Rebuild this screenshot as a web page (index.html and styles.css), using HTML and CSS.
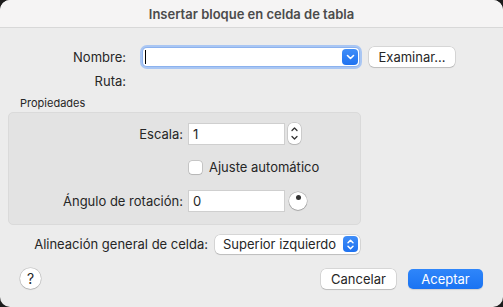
FILE: index.html
```html
<!DOCTYPE html>
<html lang="es">
<head>
    <meta charset="UTF-8">
    <title>Insertar bloque en celda de tabla</title>
    <link rel="stylesheet" href="styles.css">
</head>
<body>
    <div class="window">
        <div class="titlebar">Insertar bloque en celda de tabla</div>

        <div class="content">
            <div class="row row-name">
                <label class="label">Nombre:</label>
                <div class="combo">
                    <span class="caret"></span>
                    <span class="combo-btn">
                        <svg width="9" height="6" viewBox="0 0 9 6"><path d="M1.5 1.5 L4.5 4.5 L7.5 1.5" fill="none" stroke="#fff" stroke-width="1.6" stroke-linecap="round" stroke-linejoin="round"/></svg>
                    </span>
                </div>
                <button class="btn browse">Examinar...</button>
            </div>

            <div class="row row-path">
                <label class="label">Ruta:</label>
            </div>

            <div class="group-title">Propiedades</div>
            <div class="group">
                <div class="row">
                    <label class="glabel">Escala:</label>
                    <input class="field" type="text" value="1">
                    <span class="stepper">
                        <svg width="13" height="21" viewBox="0 0 13 21">
                            <path d="M4 7.5 L6.5 5 L9 7.5" fill="none" stroke="#333" stroke-width="1.3" stroke-linecap="round" stroke-linejoin="round"/>
                            <path d="M4 13.5 L6.5 16 L9 13.5" fill="none" stroke="#333" stroke-width="1.3" stroke-linecap="round" stroke-linejoin="round"/>
                        </svg>
                    </span>
                </div>
                <div class="row row-check">
                    <span class="glabel"></span>
                    <span class="checkbox"></span>
                    <span class="check-text">Ajuste automático</span>
                </div>
                <div class="row row-angle">
                    <label class="glabel">Ángulo de rotación:</label>
                    <input class="field" type="text" value="0">
                    <span class="dial"><span class="dot"></span></span>
                </div>
            </div>

            <div class="row row-align">
                <label class="alabel">Alineación general de celda:</label>
                <div class="popup">
                    <span>Superior izquierdo</span>
                    <span class="popup-btn">
                        <svg width="9" height="13" viewBox="0 0 9 13"><path d="M2 4.8 L4.5 2.3 L7 4.8 M2 8.2 L4.5 10.7 L7 8.2" fill="none" stroke="#fff" stroke-width="1.5" stroke-linecap="round" stroke-linejoin="round"/></svg>
                    </span>
                </div>
            </div>

            <div class="footer">
                <button class="help">?</button>
                <div class="actions">
                    <button class="btn">Cancelar</button>
                    <button class="btn primary">Aceptar</button>
                </div>
            </div>
        </div>
    </div>
</body>
</html>
```

FILE: styles.css
```css
body {
    margin: 0;
    background: #1c1c1c;
    font-family: Inter, 'Liberation Sans', Arial, sans-serif;
    font-size: 13px;
    color: #262626;
}
.window {
    width: 503px;
    height: 307px;
    background: #ececec;
    border-radius: 10px;
    overflow: hidden;
}
.titlebar {
    height: 28px;
    line-height: 28px;
    background: #f5f4f4;
    border-bottom: 1px solid #d8d8d8;
    text-align: center;
    font-weight: 600;
    color: #4b4b4b;
    box-sizing: border-box;
}
.content {
    padding: 0 20px 0 8px;
}
.row {
    display: flex;
    align-items: center;
}
.label {
    width: 118px;
    text-align: right;
    margin-right: 17px;
}
.row-name {
    margin-top: 18px;
    height: 22px;
}
.combo {
    width: 213px;
    height: 18px;
    background: #fff;
    border-radius: 4px;
    box-shadow: 0 0 0 1px #8cb2ee, 0 0 0 3px #a9c6f3;
    display: flex;
    align-items: center;
    justify-content: space-between;
    padding-left: 2px;
    padding-right: 1px;
    box-sizing: content-box;
}
.caret {
    width: 1px;
    height: 14px;
    background: #000;
}
.combo-btn {
    width: 16px;
    height: 16px;
    border-radius: 4px;
    background: linear-gradient(#3f8df8, #1f72f0);
    display: flex;
    align-items: center;
    justify-content: center;
}
.btn {
    font-family: inherit;
    font-size: 13px;
    color: #262626;
    background: #fff;
    border: none;
    border-radius: 5px;
    height: 20px;
    padding: 0 12px;
    box-shadow: 0 0 0 0.5px rgba(0, 0, 0, 0.18), 0 1px 1px rgba(0, 0, 0, 0.12);
}
.browse {
    margin-left: 10px;
    width: 86px;
    padding: 0;
}
.row-path {
    margin-top: 2px;
    height: 22px;
}
.group-title {
    font-size: 11px;
    margin: 4px 0 2px 12px;
    height: 14px;
    line-height: 14px;
}
.group {
    width: 353px;
    height: 113px;
    background: #e3e3e3;
    border: 1px solid #dadada;
    border-radius: 5px;
    padding-top: 10px;
    box-sizing: border-box;
}
.glabel {
    width: 174px;
    text-align: right;
    margin-right: 6px;
}
.field {
    width: 95px;
    height: 20px;
    box-sizing: border-box;
    border: none;
    background: #fff;
    box-shadow: 0 0 0 1px #cfcfcf;
    font-family: inherit;
    font-size: 13px;
    color: #262626;
    padding: 0 4px;
    outline: none;
}
.stepper {
    margin-left: 4px;
    width: 13px;
    height: 21px;
    background: #fff;
    border-radius: 5px;
    box-shadow: 0 0 0 0.5px rgba(0, 0, 0, 0.2), 0 1px 1px rgba(0, 0, 0, 0.1);
    display: flex;
}
.row-check {
    margin-top: 16px;
    height: 14px;
}
.checkbox {
    width: 13px;
    height: 13px;
    background: #fff;
    border-radius: 3px;
    box-shadow: 0 0 0 0.5px rgba(0, 0, 0, 0.25), 0 1px 1px rgba(0, 0, 0, 0.08);
    margin-right: 7px;
}
.row-angle {
    margin-top: 17px;
}
.dial {
    margin-left: 5px;
    width: 18px;
    height: 18px;
    border-radius: 50%;
    background: #fff;
    box-shadow: 0 0 0 0.5px rgba(0, 0, 0, 0.25), 0 1px 1px rgba(0, 0, 0, 0.15);
    display: flex;
    justify-content: center;
}
.dot {
    width: 5px;
    height: 5px;
    border-radius: 50%;
    background: #333;
    margin-top: 3px;
}
.row-align {
    margin-top: 9px;
    height: 20px;
}
.alabel {
    width: 200px;
    text-align: right;
    margin-right: 7px;
}
.popup {
    width: 145px;
    height: 19px;
    background: #fff;
    border-radius: 5px;
    box-shadow: 0 0 0 0.5px rgba(0, 0, 0, 0.18), 0 1px 1px rgba(0, 0, 0, 0.12);
    display: flex;
    align-items: center;
    justify-content: space-between;
    padding-left: 8px;
    padding-right: 2px;
    box-sizing: border-box;
}
.popup-btn {
    width: 15px;
    height: 16px;
    border-radius: 4px;
    background: linear-gradient(#3f8df8, #1f72f0);
    display: flex;
    align-items: center;
    justify-content: center;
}
.footer {
    margin-top: 14px;
    display: flex;
    align-items: center;
    justify-content: space-between;
    padding-left: 12px;
}
.help {
    width: 21px;
    height: 21px;
    border-radius: 50%;
    border: none;
    background: #fff;
    box-shadow: 0 0 0 0.5px rgba(0, 0, 0, 0.2), 0 1px 1px rgba(0, 0, 0, 0.12);
    font-family: inherit;
    font-size: 14px;
    color: #262626;
    padding: 0;
}
.actions {
    display: flex;
    gap: 12px;
}
.actions .btn {
    width: 75px;
    padding: 0;
}
.btn.primary {
    background: linear-gradient(#2f86fa, #1a73f2);
    color: #fff;
    box-shadow: 0 1px 1px rgba(0, 0, 0, 0.12);
}
```
